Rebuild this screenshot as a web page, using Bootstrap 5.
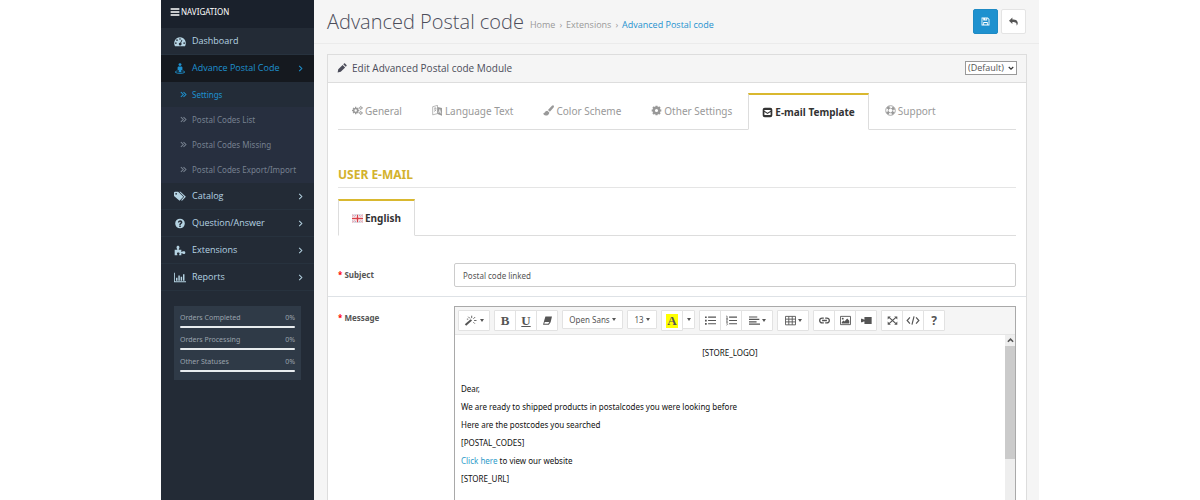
<!DOCTYPE html>
<html lang="en">
<head>
<meta charset="utf-8">
<meta name="viewport" content="width=device-width, initial-scale=1">
<title>Advanced Postal code</title>
<link href="https://cdn.jsdelivr.net/npm/bootstrap@5.3.0/dist/css/bootstrap.min.css" rel="stylesheet">
<style>
body{font-family:"Noto Sans","Open Sans",sans-serif;font-size:8px;line-height:18px;color:#555;background:#fff}
.side-link,.top,.box-head{font-family:"Open Sans",sans-serif}
a{text-decoration:none}
.ico{width:10px;height:10px;fill:currentColor;flex:none;display:block}
.ln{fill:none;stroke:currentColor}
.app{max-width:878px}
.side{width:153px;flex:none;background:#232b36;color:#b5d3e2}
.side-title{height:28px;background:#1a212c;color:#fff;padding:0 9px 4px;gap:1px}
.side-link{height:27px;padding:0 10px 0 13px;color:#b5d3e2;font-size:9px;border-bottom:1px solid #27323e}
.side-link .ico:first-child{width:12px;height:11px;margin-right:6px}
.side-link:hover,.sub-link:hover{color:#1e91cf}
.side-link.open{background:#15191f;color:#1e91cf;border-color:#15191f}
.sub-menu{padding-bottom:1px;background:#272f3f}
.sub-link{height:25px;padding-left:19px;gap:5px;color:#76808f}
.sub-link.current{color:#1e91cf;background:#232c38}
.sub-link .ico{width:7px;height:7px}
.side-link .chev{width:7px;height:7px}
.stats{background:#2f3a47;margin:15px 13px 0;padding:4px 6px 5px;color:#9aa3ad;font-size:7px;line-height:16px}
.stats li{height:21px}
.stats li+li{margin-top:1px}
.stats .progress{height:2px;border-radius:1px;background:#e8ecef}
.main{background:#f5f5f5;min-width:0}
.top{height:44px;padding:0 13px;border-bottom:1px solid #ebebeb}
.top h1{font-size:20px;font-weight:300;line-height:27px;color:#4c4d5a}
.crumbs{font-size:9px;color:#999;gap:4px;padding-top:6px;margin-left:6px}
.crumbs a{color:#999}
.crumbs .here{color:#1e91cf}
.acts{gap:3px}
.act{width:25px;height:25px;padding:0;border-radius:2px;display:flex;align-items:center;justify-content:center}
.act .ico{width:9px;height:9px}
.act.save{background:#1e91cf;border-color:#1e8ac4;color:#fff}
.act.back{background:#fff;border-color:#e4e4e4;color:#555}
.box{margin:10px 12px 0 13px;border:1px solid #ddd;border-bottom:0;background:#fff}
.box-head{height:28px;padding:0 9px 1px;background:#f5f5f5;border-bottom:1px solid #ddd;color:#4c4d5a;gap:5px}
.box-head h2{font-size:10px;line-height:18px}
.store{appearance:none;width:52px;height:14px;padding:0 2px;border:1px solid #999;border-radius:0;font-size:9px;line-height:12px;color:#555;background:#fff url("data:image/svg+xml,%3Csvg xmlns='http://www.w3.org/2000/svg' viewBox='0 0 8 6'%3E%3Cpath d='M1 1l3 3 3-3' fill='none' stroke='%23333' stroke-width='1.6'/%3E%3C/svg%3E") no-repeat right 2px center/6px 5px}
.tabs{border-bottom:1px solid #ddd;margin:10px 10px 0;height:37px;flex-wrap:nowrap;gap:2px}
.tabs .nav-link{height:37px;padding:0 13px 3px;border:1px solid transparent;border-top:2px solid transparent;border-radius:0;color:#999;font-size:10px;display:flex;align-items:center;gap:2px;white-space:nowrap;background:none}
.tabs .nav-link.active{border-color:#d9b82f #ddd #fff;background:#fff;color:#333;font-weight:700;padding-bottom:0}
.tabs .nav-link .ico{width:11px;height:11px}
.legend{margin:37px 10px 0;height:21px;border-bottom:1px solid #e5e5e5;color:#d3b22d;font-size:12px;font-weight:700;line-height:16px}
.lang-tabs{margin-top:11px}
.fields{margin-top:17px}
.line{padding:10px 10px 9px}
.line+.line{padding-bottom:0;padding-top:9px}
.line label,.line .cap{width:116px;flex:none;font-weight:700;line-height:24px}
.req{color:#f00}
.subject{height:24px;padding:0 8px;border:1px solid #ccc;border-radius:2px;font-size:8px;color:#555}
.edit{border:1px solid #a9a9a9;border-bottom:0;min-width:0}
.bar{height:28px;padding:3px;background:#f5f5f5;border-bottom:1px solid #e5e5e5;gap:4px}
.bar .btn{height:21px;padding:0;width:22px;border:1px solid #e2e2e2;border-radius:1px;background:#fff;color:#555;font-size:8px;line-height:18px;display:flex;align-items:center;justify-content:center;gap:2px;flex:none}
.bar .btn-group .btn:not(:first-child){margin-left:-1px}
.bar .btn:hover{background:#eee}
.bar .ico{width:11px;height:11px}
.bar .ico.wide{width:14px}
.bar .serif{font-family:"Liberation Serif",serif;font-size:13px;font-weight:700}
.bar .help{font-size:12px;font-weight:700}
.bar .w-wand{width:32px}.bar .w-font{width:61px;height:19px}.bar .w-size{width:30px;height:19px}.bar .w-drop{width:13px;height:19px}
.bar .ink{background:#ff0;padding:0 1px;line-height:14px}
.tri{border:2px solid transparent;border-top:3px solid #555;border-bottom:0}
.doc{padding:9px 6px 0;color:#111;min-width:0}
.doc p{margin:0;min-height:18px}
.doc a{color:#2d9bc9}
.rail{width:10px;flex:none;background:#eee}
.rail .up{height:11px;display:flex;align-items:center;justify-content:center}
.rail .up .ico{width:7px;height:7px}
.rail .thumb{height:113px;background:#cbcbcb}
</style>
</head>
<body>
<svg class="d-none" xmlns="http://www.w3.org/2000/svg">
<symbol id="menu" viewBox="0 0 16 16"><path d="M1 2h14v2.500H1zM1 6.800h14v2.500H1zM1 11.600h14v2.500H1z"/></symbol>
<symbol id="gauge" viewBox="0 0 18 16"><path fill-rule="evenodd" d="M9 1.500a9 9 0 0 1 7.500 13.500h-15A9 9 0 0 1 9 1.500zM9 3a1.200 1.200 0 1 0 0 2.400A1.200 1.200 0 0 0 9 3zM4.500 4.800a1.200 1.200 0 1 0 0 2.400 1.200 1.200 0 0 0 0-2.400zM2.800 9.300a1.200 1.200 0 1 0 0 2.400 1.200 1.200 0 0 0 0-2.400zM15.200 9.300a1.200 1.200 0 1 0 0 2.400 1.200 1.200 0 0 0 0-2.400zM11.500 5.500l-2.200 4.300a2 2 0 1 0 1.300.5l2-4.400z"/></symbol>
<symbol id="street" viewBox="0 0 16 16"><circle cx="8" cy="2.300" r="2.100"/><path d="M5.500 5h5l1 1v4H10v3.500H6V10H4.500V6z"/><path class="ln" stroke-width="1.300" d="M4.500 11.500C1 12 .8 13 1.500 13.800c2 1.700 11 1.700 13 0 .7-.8.500-1.800-3-2.300"/></symbol>
<symbol id="tags" viewBox="0 0 18 16"><path fill-rule="evenodd" d="M0 2.500C0 1.500.5 1 1.500 1h4.700L14 8.500l-5.700 6L0 7.200zM3.200 2.700a1.300 1.300 0 1 0 0 2.600 1.300 1.300 0 0 0 0-2.600z"/><path d="M8 1h1.800l8 7.500-5.800 6-1.300-1 4.500-5z"/></symbol>
<symbol id="ask" viewBox="0 0 16 16"><path fill-rule="evenodd" d="M8 1a7 7 0 1 1 0 14A7 7 0 0 1 8 1zM6.900 11v2h2.200v-2zM4.800 6.300l1.800.7c.3-2 2.600-1.700 2.500-.5-.1.900-2.200 1.200-2.200 3.500h2.100c0-1.200 2.500-1.400 2.500-3.700 0-3.800-5.800-4.300-6.700 0z"/></symbol>
<symbol id="puzzle" viewBox="0 0 18 16"><path d="M1 7h3.700c.7-1-.9-1.700-.9-3.500C3.800 2 4.700 1 6 1s2.200 1 2.200 2.500C8.200 5.300 6.600 6 7.300 7H11v3.200c1.200.5 1.600-1 3.500-1 1.500 0 2.500.8 2.500 2s-1 2-2.500 2c-1.900 0-2.300-1.400-3.500-1V15H7.800c-.5-1 .6-1.200.6-2.400 0-1-.8-1.600-2-1.600s-2 .6-2 1.600c0 1.200 1 1.400.6 2.400H1z"/></symbol>
<symbol id="chart" viewBox="0 0 18 16"><path d="M0 1h1.300v12.700H18V15H0zM3 8.500h2.200V13H3zM6.500 5h2.200v8H6.500zM10 7h2.200v6H10zM13.500 3h2.200v10h-2.200z"/></symbol>
<symbol id="right" viewBox="0 0 8 8"><path class="ln" stroke-width="1.200" d="M2.500 1l3 3-3 3"/></symbol>
<symbol id="dbl" viewBox="0 0 8 8"><path class="ln" stroke-width="1.200" d="M1 1.200L3.800 4 1 6.800M4 1.200L6.800 4 4 6.800"/></symbol>
<symbol id="up" viewBox="0 0 8 8"><path class="ln" stroke-width="1.800" d="M1 5.500l3-3 3 3"/></symbol>
<symbol id="save" viewBox="0 0 16 16"><path fill-rule="evenodd" d="M1 1h11l3 3v11H1zM2.500 2.500v11H4V9h8v4.500h1.500v-9l-2-2H11V6H4V2.500zM7.500 2.500v2h2v-2zM5.500 10.500v3h5v-3z"/></symbol>
<symbol id="reply" viewBox="0 0 16 16"><path d="M6 1v3.500c7 0 10 2.500 9.500 7-.2 1.500-1 3-2 3.500C14 10.500 12 9 6 9v3.500L0 6.700z"/></symbol>
<symbol id="pencil" viewBox="0 0 16 16"><path d="M1 15l1-5L9 3l4 4-7 7zM10 2l1.300-1.200c.5-.4 1-.4 1.500 0l2.400 2.400c.4.500.4 1 0 1.500L14 6z"/></symbol>
<symbol id="cog" viewBox="0 0 16 16"><circle class="ln" cx="8" cy="8" r="4" stroke-width="3.400"/><path class="ln" stroke-width="3" d="M8 1v2.500M8 12.500V15M1 8h2.500M12.500 8H15M3 3l1.700 1.700M11.300 11.300L13 13M3 13l1.700-1.700M11.300 4.700L13 3"/></symbol>
<symbol id="cogs" viewBox="0 0 18 16"><circle class="ln" cx="6" cy="8" r="3.300" stroke-width="2.600"/><path class="ln" stroke-width="2.200" d="M6 2v2M6 12v2M0 8h2M10 8h2M1.800 3.800l1.400 1.400M8.800 10.800l1.400 1.400M1.800 12.200l1.400-1.400M8.800 5.200l1.400-1.400"/><circle class="ln" cx="14.300" cy="3.800" r="1.800" stroke-width="1.500"/><path class="ln" stroke-width="1.300" d="M14.300.5V2M14.300 5.500V7M11 3.800h1.500M16 3.800h2"/><circle class="ln" cx="14.300" cy="12" r="1.800" stroke-width="1.500"/><path class="ln" stroke-width="1.300" d="M14.300 8.700v1.500M14.300 13.700v1.600M11 12h1.500M16 12h2"/></symbol>
<symbol id="lang" viewBox="0 0 16 16"><path d="M8 3l6.500 1.500v11L8 13z"/><path class="ln" stroke-width="1" d="M1 2.500l7-2v12l-7 1.800zM3 5l3-.7M4.500 3.500v1.200M3 9.500c2-1 2.800-2.500 2.800-5M3.300 6.500l2.700 2.200"/><path stroke="#fff" fill="none" d="M9.700 11.500l1.600-5 1.700 6M10.300 9.700l2 .5"/></symbol>
<symbol id="brush" viewBox="0 0 16 16"><path d="M15.300.7c.9.800.8 1.800.1 2.800L10 9.800 7.200 7.300 13 1.200c.8-.8 1.600-1 2.300-.5zM6.300 8.200l2.900 2.600c-.2 3-2.200 4.500-5 4.500C1.700 15.300.5 13.800.3 12c2 1 1.700-3.500 6-3.800z"/></symbol>
<symbol id="mail" viewBox="0 0 16 16"><path fill-rule="evenodd" d="M4 1h8a3 3 0 0 1 3 3v8a3 3 0 0 1-3 3H4a3 3 0 0 1-3-3V4a3 3 0 0 1 3-3zM3.500 4.500v1l4.500 3 4.500-3v-1zM3.500 7.300v4.200h9V7.300L8 10.300z"/></symbol>
<symbol id="ring" viewBox="0 0 16 16"><circle class="ln" cx="8" cy="8" r="7" stroke-width="1.200"/><circle class="ln" cx="8" cy="8" r="3.300" stroke-width="1.200"/><path class="ln" stroke-width="3.600" stroke-dasharray="3.930" stroke-dashoffset="-1.960" d="M13 8A5 5 0 1 1 3 8a5 5 0 0 1 10 0"/></symbol>
<symbol id="flag" viewBox="0 0 16 11"><path fill="#777a9f" d="M0 0h16v11H0z"/><path stroke="#f4e6ea" stroke-width="3.500" d="M0 0l16 11M16 0L0 11"/><path stroke="#dd7f90" d="M0 0l16 11M16 0L0 11"/><path stroke="#fff" stroke-width="5" d="M8 0v11M0 5.500h16"/><path stroke="#d8404a" stroke-width="2" d="M8 0v11M0 5.500h16"/></symbol>
<symbol id="wand" viewBox="0 0 18 16"><path d="M0 13.500L8.500 6l2 2L2 15.500z"/><path class="ln" stroke-width="1.300" d="M10 4.500V1M12.500 5.500L15 3M13.500 8H17M12.500 10.500l2 2M7.500 5L5 2.500M3 6h2"/></symbol>
<symbol id="eraser" viewBox="0 0 16 16"><path fill-rule="evenodd" d="M5 2h9.500l-2 8.500-2.500 3.500H1.500l2-7zM3.300 12.700H9l1.700-2.700H4z"/></symbol>
<symbol id="ul" viewBox="0 0 16 16"><path d="M0 2h2.500v2.500H0zM0 6.800h2.500v2.500H0zM0 11.600h2.500v2.500H0zM4.500 2.300H16v1.700H4.500zM4.500 7.100H16v1.700H4.500zM4.500 11.900H16v1.700H4.500z"/></symbol>
<symbol id="ol" viewBox="0 0 16 16"><path d="M4.500 2.300H16v1.700H4.500zM4.500 7.100H16v1.700H4.500zM4.500 11.900H16v1.700H4.500z"/><path class="ln" stroke-width="1" d="M.5 1.500h1v3.500M.3 5h2.400M.3 6.500h2L.5 9.300h2.200M.3 11h2L1.500 12.500l1 1-2 1.300"/></symbol>
<symbol id="left" viewBox="0 0 16 16"><path d="M0 2h12v1.800H0zM0 5.500h15v1.800H0zM0 9h11v1.800H0zM0 12.500h16v1.800H0z"/></symbol>
<symbol id="grid" viewBox="0 0 16 16"><path class="ln" stroke-width="1.300" d="M.7 2h14.600v12.300H.7zM.7 6h14.600M.7 10h14.600M5.500 2v12.300M10.500 2v12.300"/></symbol>
<symbol id="link" viewBox="0 0 16 16"><path class="ln" stroke-width="1.900" d="M7 11.500H4.500a3.500 3.500 0 0 1 0-7H7M9 4.500h2.500a3.500 3.500 0 0 1 0 7H9M4.500 8h7"/></symbol>
<symbol id="pic" viewBox="0 0 16 16"><path class="ln" stroke-width="1.300" d="M.7 2h14.600v12H.7z"/><circle cx="4" cy="5.300" r="1.400"/><path d="M2.500 12.500v-2L5 8l1.500 1.500L10.500 5l3 3.500v4z"/></symbol>
<symbol id="video" viewBox="0 0 16 16"><path d="M5 3h10.500v10H5zM0 5.500h1.500L5 7v2l-3.500 1.500H0z"/></symbol>
<symbol id="full" viewBox="0 0 16 16"><path d="M1 2h4.500L1 6.500zM15 2v4.500L10.500 2zM1 14V9.500L5.500 14zM15 14h-4.500L15 9.500z"/><path class="ln" stroke-width="1.800" d="M3 3.500l10 9M13 3.500l-10 9"/></symbol>
<symbol id="code" viewBox="0 0 20 16"><path class="ln" stroke-width="1.700" d="M5.500 3.500L1.500 8l4 4.500M14.500 3.500l4 4.500-4 4.500M11.500 2l-3 12"/></symbol>
</svg>

<div class="app mx-auto d-flex min-vh-100">
  <aside class="side">
    <div class="side-title d-flex align-items-center"><svg class="ico"><use href="#menu"/></svg><span>NAVIGATION</span></div>
    <nav>
      <a href="#" class="side-link d-flex align-items-center"><svg class="ico"><use href="#gauge"/></svg><span>Dashboard</span></a>
      <a href="#" class="side-link open d-flex align-items-center"><svg class="ico"><use href="#street"/></svg><span>Advance Postal Code</span><svg class="ico chev ms-auto"><use href="#right"/></svg></a>
      <div class="sub-menu">
        <a href="#" class="sub-link current d-flex align-items-center"><svg class="ico"><use href="#dbl"/></svg><span>Settings</span></a>
        <a href="#" class="sub-link d-flex align-items-center"><svg class="ico"><use href="#dbl"/></svg><span>Postal Codes List</span></a>
        <a href="#" class="sub-link d-flex align-items-center"><svg class="ico"><use href="#dbl"/></svg><span>Postal Codes Missing</span></a>
        <a href="#" class="sub-link d-flex align-items-center"><svg class="ico"><use href="#dbl"/></svg><span>Postal Codes Export/Import</span></a>
      </div>
      <a href="#" class="side-link d-flex align-items-center"><svg class="ico"><use href="#tags"/></svg><span>Catalog</span><svg class="ico chev ms-auto"><use href="#right"/></svg></a>
      <a href="#" class="side-link d-flex align-items-center"><svg class="ico"><use href="#ask"/></svg><span>Question/Answer</span><svg class="ico chev ms-auto"><use href="#right"/></svg></a>
      <a href="#" class="side-link d-flex align-items-center"><svg class="ico"><use href="#puzzle"/></svg><span>Extensions</span><svg class="ico chev ms-auto"><use href="#right"/></svg></a>
      <a href="#" class="side-link d-flex align-items-center"><svg class="ico"><use href="#chart"/></svg><span>Reports</span><svg class="ico chev ms-auto"><use href="#right"/></svg></a>
    </nav>
    <ul class="stats list-unstyled mb-0">
      <li><div class="d-flex justify-content-between"><span>Orders Completed</span><span>0%</span></div><div class="progress"></div></li>
      <li><div class="d-flex justify-content-between"><span>Orders Processing</span><span>0%</span></div><div class="progress"></div></li>
      <li><div class="d-flex justify-content-between"><span>Other Statuses</span><span>0%</span></div><div class="progress"></div></li>
    </ul>
  </aside>

  <main class="main flex-grow-1 d-flex flex-column">
    <header class="top d-flex align-items-center">
      <h1 class="mb-0">Advanced Postal code</h1>
      <nav class="crumbs d-flex"><a href="#">Home</a><span>›</span><a href="#">Extensions</a><span>›</span><a href="#" class="here">Advanced Postal code</a></nav>
      <div class="acts ms-auto d-flex">
        <button type="button" class="btn act save" aria-label="Save"><svg class="ico"><use href="#save"/></svg></button>
        <button type="button" class="btn act back" aria-label="Back"><svg class="ico"><use href="#reply"/></svg></button>
      </div>
    </header>

    <section class="box flex-grow-1 d-flex flex-column">
      <div class="box-head d-flex align-items-center">
        <svg class="ico"><use href="#pencil"/></svg><h2 class="mb-0">Edit Advanced Postal code Module</h2>
        <select class="store ms-auto" aria-label="Store"><option>(Default)</option></select>
      </div>
      <div class="tabs nav">
        <button type="button" class="nav-link"><svg class="ico"><use href="#cogs"/></svg>General</button>
        <button type="button" class="nav-link"><svg class="ico"><use href="#lang"/></svg>Language Text</button>
        <button type="button" class="nav-link"><svg class="ico"><use href="#brush"/></svg>Color Scheme</button>
        <button type="button" class="nav-link"><svg class="ico"><use href="#cog"/></svg>Other Settings</button>
        <button type="button" class="nav-link active"><svg class="ico"><use href="#mail"/></svg>E-mail Template</button>
        <button type="button" class="nav-link"><svg class="ico"><use href="#ring"/></svg>Support</button>
      </div>
      <h3 class="legend">USER E-MAIL</h3>
      <div class="tabs lang-tabs nav">
        <button type="button" class="nav-link active"><svg class="ico"><use href="#flag"/></svg>English</button>
      </div>
      <form class="fields flex-grow-1 d-flex flex-column">
        <div class="line d-flex border-bottom">
          <label for="subject"><span class="req">*</span> Subject</label>
          <input id="subject" class="form-control subject" value="Postal code linked">
        </div>
        <div class="line d-flex flex-grow-1">
          <div class="cap"><span class="req">*</span> Message</div>
          <div class="edit flex-grow-1 d-flex flex-column">
            <div class="bar d-flex">
              <button type="button" class="btn w-wand" aria-label="Style"><svg class="ico wide"><use href="#wand"/></svg><span class="tri"></span></button>
              <div class="btn-group">
                <button type="button" class="btn serif">B</button>
                <button type="button" class="btn serif text-decoration-underline">U</button>
                <button type="button" class="btn" aria-label="Clear"><svg class="ico"><use href="#eraser"/></svg></button>
              </div>
              <button type="button" class="btn w-font">Open Sans <span class="tri"></span></button>
              <button type="button" class="btn w-size">13<span class="tri"></span></button>
              <div class="btn-group align-items-start">
                <button type="button" class="btn serif"><span class="ink">A</span></button>
                <button type="button" class="btn w-drop" aria-label="More colors"><span class="tri"></span></button>
              </div>
              <div class="btn-group">
                <button type="button" class="btn" aria-label="List"><svg class="ico"><use href="#ul"/></svg></button>
                <button type="button" class="btn" aria-label="Numbered list"><svg class="ico"><use href="#ol"/></svg></button>
                <button type="button" class="btn w-wand" aria-label="Align"><svg class="ico"><use href="#left"/></svg><span class="tri"></span></button>
              </div>
              <button type="button" class="btn w-wand" aria-label="Table"><svg class="ico"><use href="#grid"/></svg><span class="tri"></span></button>
              <div class="btn-group">
                <button type="button" class="btn" aria-label="Link"><svg class="ico"><use href="#link"/></svg></button>
                <button type="button" class="btn" aria-label="Picture"><svg class="ico"><use href="#pic"/></svg></button>
                <button type="button" class="btn" aria-label="Video"><svg class="ico"><use href="#video"/></svg></button>
              </div>
              <div class="btn-group">
                <button type="button" class="btn" aria-label="Full screen"><svg class="ico"><use href="#full"/></svg></button>
                <button type="button" class="btn" aria-label="Code"><svg class="ico wide"><use href="#code"/></svg></button>
                <button type="button" class="btn help">?</button>
              </div>
            </div>
            <div class="d-flex flex-grow-1">
              <div class="doc flex-grow-1" contenteditable="true">
                <p class="text-center">[STORE_LOGO]</p>
                <p></p>
                <p>Dear,</p>
                <p>We are ready to shipped products in postalcodes you were looking before</p>
                <p>Here are the postcodes you searched</p>
                <p>[POSTAL_CODES]</p>
                <p><a href="#">Click here</a> to view our website</p>
                <p>[STORE_URL]</p>
              </div>
              <div class="rail"><div class="up"><svg class="ico"><use href="#up"/></svg></div><div class="thumb"></div></div>
            </div>
          </div>
        </div>
      </form>
    </section>
  </main>
</div>
<script src="https://cdn.jsdelivr.net/npm/bootstrap@5.3.0/dist/js/bootstrap.bundle.min.js"></script>
</body>
</html>
